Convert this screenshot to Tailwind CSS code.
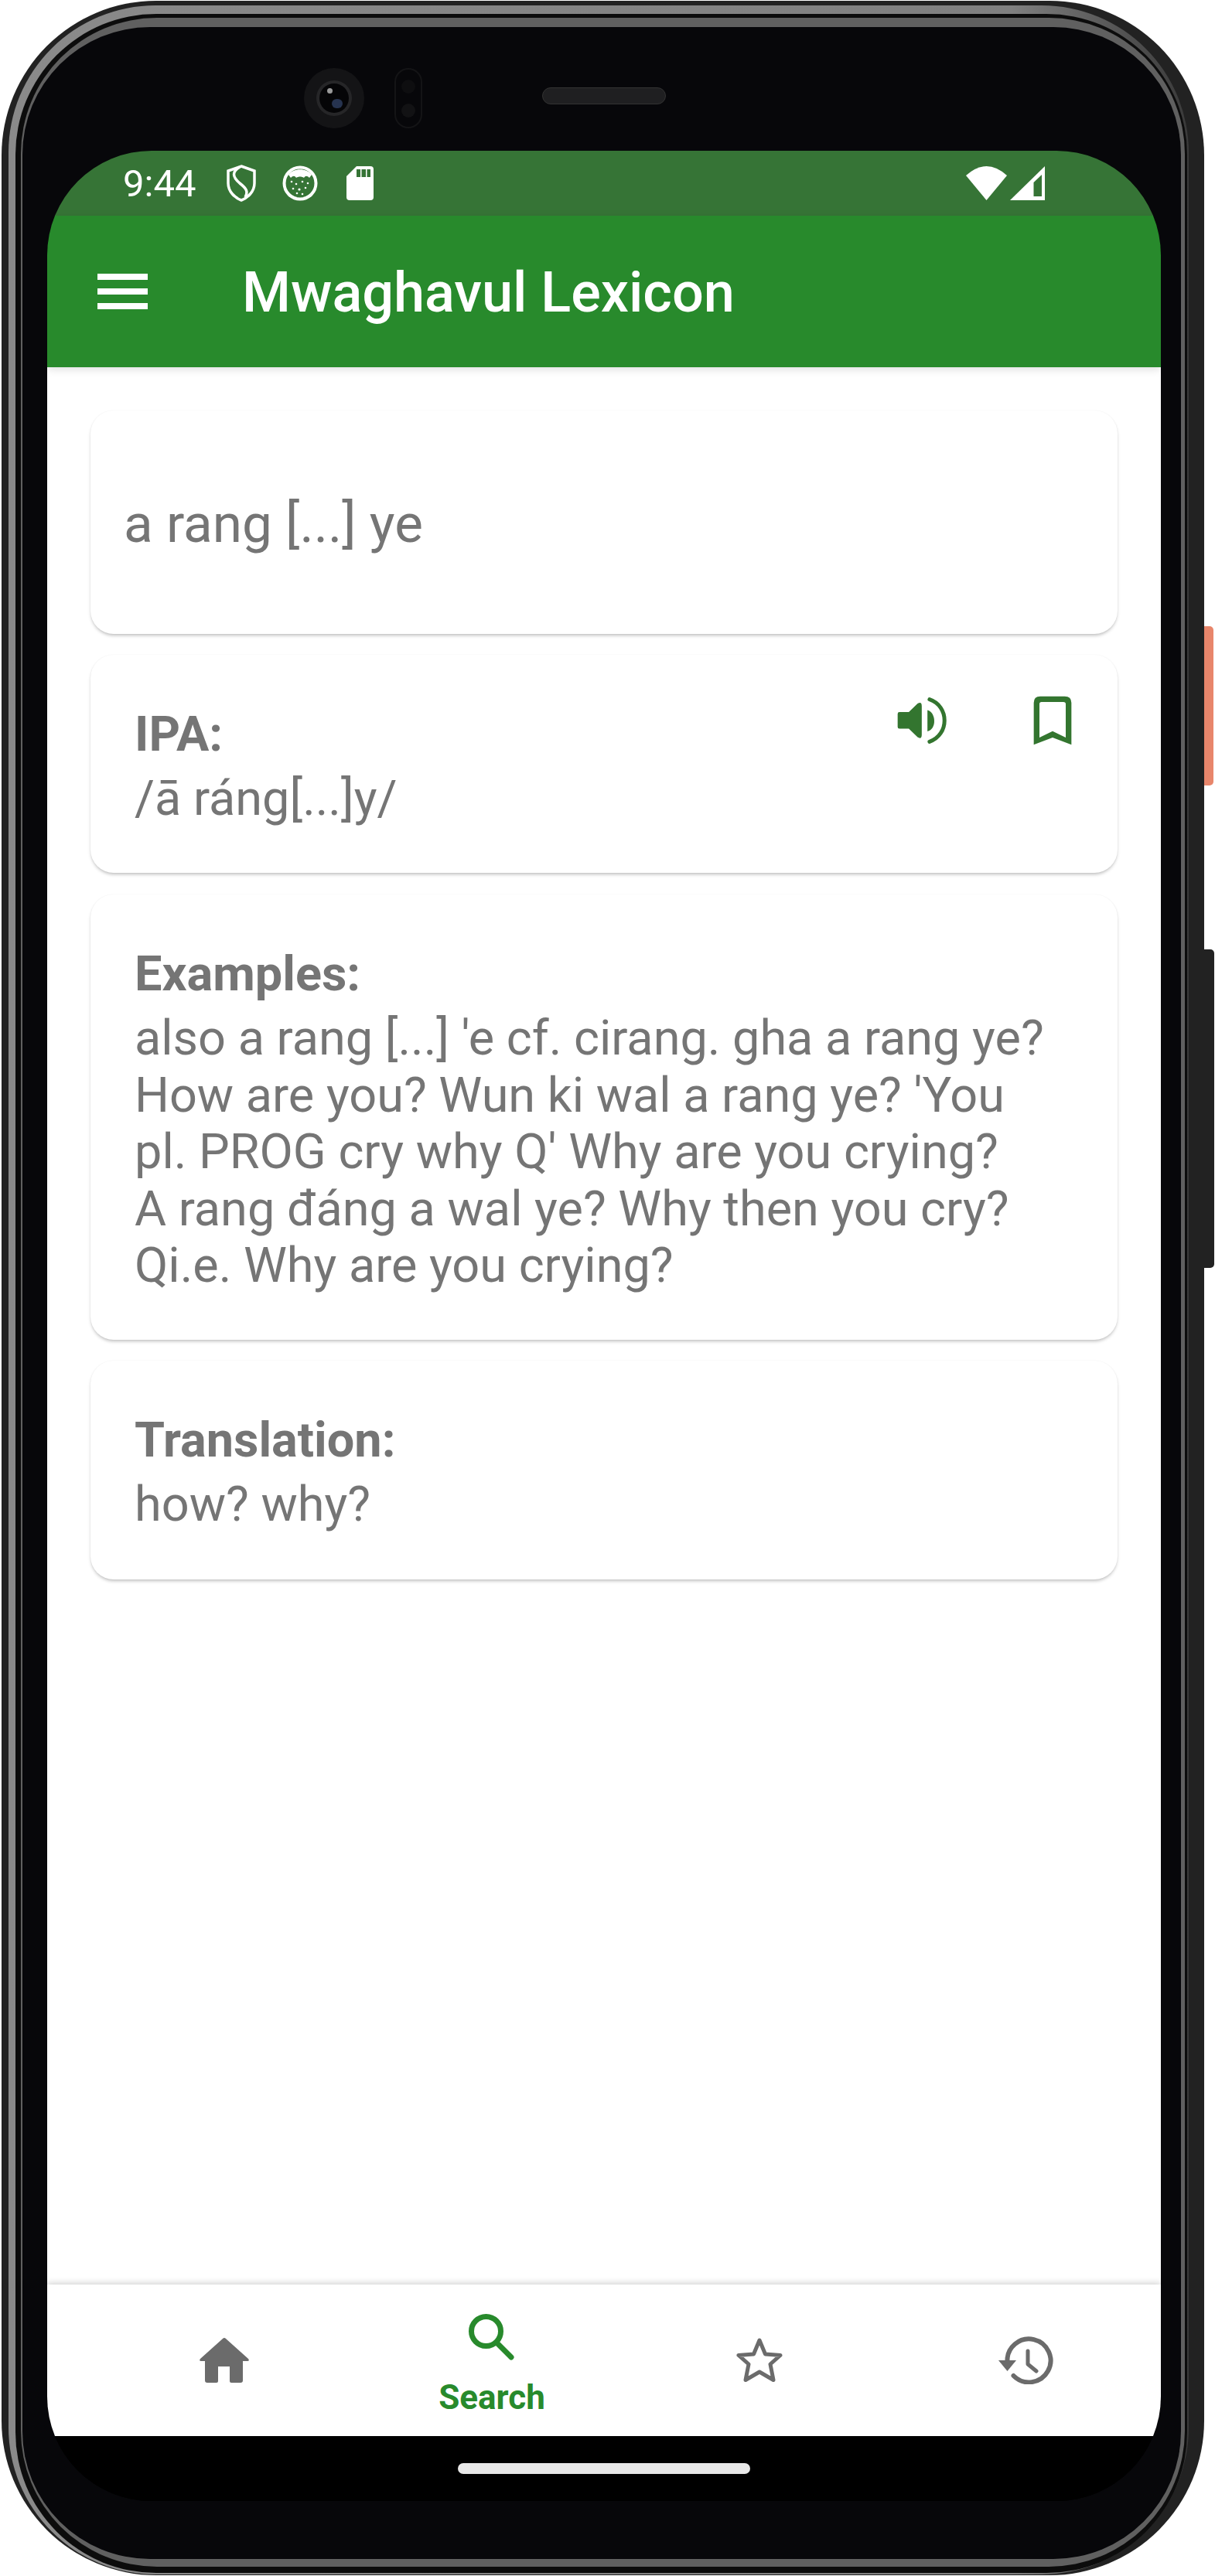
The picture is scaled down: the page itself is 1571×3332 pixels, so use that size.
<!DOCTYPE html>
<html lang="en">
<head>
  <meta charset="UTF-8" />
  <title>Mwaghavul Lexicon</title>
  <script src="https://cdn.jsdelivr.net/npm/@tailwindcss/browser@4"></script>
</head>
<body class="bg-white font-[Roboto,sans-serif]">
  <div class="relative w-[1571px] h-[3332px] pl-[2px] pt-[1px] overflow-hidden">

    <!-- Side buttons -->
    <div class="absolute left-[1556px] top-[810px] w-[13px] h-[206px] rounded-r-[5px] bg-[#e8866b]"></div>
    <div class="absolute left-[1556px] top-[1228px] w-[14px] h-[412px] rounded-r-[5px] bg-[#222222]"></div>

    <!-- Phone frame rings -->
    <div class="relative w-[1555px] h-[3330px] rounded-[200px] bg-[#222222] pl-[9px] pr-[20px] pt-[6px] pb-[1px]">
      <div class="h-full rounded-[190px] bg-linear-to-r from-[#8a8a8a] via-[#808080] via-85% to-[#3a3a3a] pl-[9px] pr-[2px] pt-[11px] pb-[2px]">
        <div class="h-full rounded-[182px] bg-[#0c0c0c] pl-[7px] pr-[3px] pt-[5px] pb-[8px]">
          <div class="h-full rounded-[176px] bg-[#606060] pl-[2px] pr-[5px] pt-[12px] pb-[10px]">
            <div class="relative h-full rounded-[165px] bg-[#07070a] pl-[32px] pr-[26px] pt-[160px]">

              <!-- Camera and earpiece -->
              <div class="absolute left-[364px] top-[53px] w-[78px] h-[78px] rounded-full bg-[#141416] flex items-center justify-center">
                <div class="relative w-[46px] h-[46px] rounded-full bg-[#262628] flex items-center justify-center">
                  <div class="w-[38px] h-[38px] rounded-full bg-[#050507]"></div>
                  <div class="absolute left-[14px] top-[10px] w-[7px] h-[7px] rounded-full bg-[#9a9a9a]"></div>
                  <div class="absolute left-[20px] top-[24px] w-[14px] h-[12px] rounded-full bg-[#26334f]"></div>
                </div>
              </div>
              <div class="absolute left-[481px] top-[53px] w-[36px] h-[78px] rounded-full border-2 border-[#141416] flex flex-col items-center justify-around py-[6px]">
                <div class="w-[18px] h-[18px] rounded-full bg-[#0e0e10]"></div>
                <div class="w-[18px] h-[18px] rounded-full bg-[#121214]"></div>
              </div>
              <div class="absolute left-[672px] top-[78px] w-[160px] h-[22px] rounded-full border border-[#333333] bg-[#1f1f21]"></div>

              <!-- Screen -->
              <div class="flex flex-col w-[1440px] h-[3040px] rounded-[135px] overflow-hidden bg-black">

                <!-- Status bar -->
                <div class="flex items-center h-[84px] shrink-0 bg-[#367436] pl-[98px] pr-[150px] text-white">
                  <span class="text-[49px] leading-none">9:44</span>
                  <svg class="ml-[39px]" width="40" height="48" viewBox="0 0 40 48" fill="none" stroke="white" stroke-width="3.5">
                    <path d="M20 2 L37 8 V24 C37 35 28 43 20 46 C12 43 3 35 3 24 V8 Z" />
                    <path d="M18 3 C8 9 8 15 18 24 C27 31 29 35 25 42" />
                  </svg>
                  <svg class="ml-[33px]" width="46" height="46" viewBox="0 0 46 46" fill="white">
                    <circle cx="23" cy="23" r="20.5" fill="none" stroke="white" stroke-width="4" />
                    <path d="M8 12 C14 3 32 3 38 12 L35 16 C32 13 30 13 28 16 C25 14 21 14 18 16 C16 13 14 13 11 16 Z" />
                    <circle cx="12" cy="21" r="1.3" /><circle cx="18" cy="24" r="1.3" /><circle cx="26" cy="21" r="1.3" />
                    <circle cx="33" cy="23" r="1.3" /><circle cx="14" cy="30" r="1.3" /><circle cx="22" cy="31" r="1.6" />
                    <circle cx="30" cy="29" r="1.3" /><circle cx="19" cy="36" r="1.3" /><circle cx="26" cy="37" r="1.3" />
                  </svg>
                  <svg class="ml-[37px]" width="35" height="44" viewBox="0 0 35 44">
                    <path fill="white" d="M13 0 H31 a4 4 0 0 1 4 4 V40 a4 4 0 0 1 -4 4 H4 a4 4 0 0 1 -4 -4 V13 Z" />
                    <path fill="#367436" d="M13 4 H18 V14 H13 Z M19.5 4 H25 V14 H19.5 Z M26.5 4 H31 V14 H26.5 Z" />
                  </svg>
                  <svg class="ml-auto" width="53" height="44" viewBox="0 0 53 44">
                    <path fill="white" d="M0 12 Q26.5 -12 53 12 L26.5 44 Z" />
                  </svg>
                  <svg class="ml-[4px]" width="45" height="44" viewBox="0 0 45 44">
                    <path fill="white" d="M0 44 L45 0 V44 Z" />
                    <path fill="#367436" d="M30.5 21 L41 11 V39 H30.5 Z" />
                  </svg>
                </div>

                <!-- App bar -->
                <div class="relative z-10 flex items-center h-[196px] shrink-0 bg-[#288a2c] pl-[65px] text-white shadow-[0_3px_10px_rgba(0,0,0,0.12)]">
                  <div class="flex flex-col gap-[11px] w-[65px]">
                    <div class="h-[8px] bg-white"></div>
                    <div class="h-[8px] bg-white"></div>
                    <div class="h-[8px] bg-white"></div>
                  </div>
                  <h1 class="ml-[122px] pt-[4px] text-[72px] font-medium leading-none">Mwaghavul Lexicon</h1>
                </div>

                <!-- Content -->
                <main class="flex-1 bg-white px-[56px] pt-[56px] text-[#757575] text-[63px] leading-[73.5px]">
                  <div class="flex items-center h-[289px] rounded-[30px] bg-white pl-[43px] pt-[5px] text-[69.3px] leading-none shadow-[0_3px_4px_-1px_rgba(0,0,0,0.25),0_0_2px_rgba(0,0,0,0.06)]">
                    a rang [...] ye
                  </div>

                  <div class="flex items-start justify-between h-[282px] mt-[27px] rounded-[30px] bg-white pl-[57px] pr-[59px] pt-[57px] shadow-[0_3px_4px_-1px_rgba(0,0,0,0.25),0_0_2px_rgba(0,0,0,0.06)]">
                    <div>
                      <h2 class="font-bold leading-[92px]">IPA:</h2>
                      <p>/ā ráng[...]y/</p>
                    </div>
                    <div class="flex items-start gap-[110px] -mt-[4px]">
                      <svg width="67" height="62" viewBox="30 30 200 185">
                        <path fill="#33752f" d="M35 100 Q35 93 42 93 H78 L112 60 Q128 50 128 70 V180 Q128 200 112 190 L78 157 H42 Q35 157 35 150 Z" />
                        <path fill="#33752f" d="M150 85 C185 95 185 160 150 167 Z" />
                        <path fill="none" stroke="#33752f" stroke-width="15" stroke-linecap="round" d="M158 44 C235 70 235 180 158 207" />
                      </svg>
                      <svg width="50" height="64" viewBox="558 28 150 192">
                        <path fill="#33752f" fill-rule="evenodd" d="M560 218 V55 Q560 30 585 30 H680 Q706 30 706 55 V218 L633 190 Z M582 190 L633 165 L684 190 V60 Q684 52 675 52 H590 Q582 52 582 60 Z" />
                      </svg>
                    </div>
                  </div>

                  <div class="h-[576px] mt-[28px] rounded-[30px] bg-white pl-[57px] pt-[57px] shadow-[0_3px_4px_-1px_rgba(0,0,0,0.25),0_0_2px_rgba(0,0,0,0.06)]">
                    <h2 class="font-bold leading-[92px]">Examples:</h2>
                    <p>also a rang [...] 'e cf. cirang. gha a rang ye?<br />How are you? Wun ki wal a rang ye? 'You<br />pl. PROG cry why Q' Why are you crying?<br />A rang đáng a wal ye? Why then you cry?<br />Qi.e. Why are you crying?</p>
                  </div>

                  <div class="h-[283px] mt-[27px] rounded-[30px] bg-white pl-[57px] pt-[57px] shadow-[0_3px_4px_-1px_rgba(0,0,0,0.25),0_0_2px_rgba(0,0,0,0.06)]">
                    <h2 class="font-bold leading-[92px]">Translation:</h2>
                    <p>how? why?</p>
                  </div>
                </main>

                <!-- Bottom navigation -->
                <nav class="relative grid grid-cols-4 h-[196px] shrink-0 bg-white pl-[56px] shadow-[0_-2px_8px_rgba(0,0,0,0.18)]">
                  <div class="flex items-center justify-center">
                    <svg width="64" height="58" viewBox="0 0 64 58">
                      <path fill="#6b6b6b" d="M30 1 Q32 -1 34 1 L63 27 Q65 30 62 30 H56 V55 Q56 58 53 58 H41 Q39 58 39 56 V37 H24 V56 Q24 58 22 58 H10 Q7 58 7 55 V30 H2 Q-1 30 1 27 Z" />
                    </svg>
                  </div>
                  <div class="flex flex-col items-center pt-[38px] text-[#288a2c]">
                    <svg width="60" height="60" viewBox="0 0 60 60" fill="none" stroke="#288a2c" stroke-width="7" stroke-linecap="round">
                      <circle cx="22.5" cy="22.5" r="19" />
                      <path d="M38 39 L55 56" />
                    </svg>
                    <span class="mt-[26px] text-[44px] font-bold leading-[44px]">Search</span>
                  </div>
                  <div class="flex items-center justify-center">
                    <svg width="60" height="58" viewBox="0 0 60 58" fill="none" stroke="#6b6b6b" stroke-width="5" stroke-linejoin="round">
                      <polygon points="30,3 37.5,21 57,22.5 44,34 48,54.5 30,44 12,54.5 16,34 3,22.5 22.5,21" />
                    </svg>
                  </div>
                  <div class="flex items-center justify-center pr-[3px]">
                    <svg width="71" height="62" viewBox="0 0 71 62" fill="none" stroke="#6b6b6b" stroke-width="6" stroke-linecap="round" stroke-linejoin="round">
                      <path d="M11.5 33 A28 28 0 1 1 19.5 51" />
                      <polygon points="0,31 23,31 11.5,45" fill="#6b6b6b" stroke="none" />
                      <path d="M38 19 V36 L49 45" stroke-width="5" />
                    </svg>
                  </div>
                </nav>

                <!-- Gesture bar -->
                <div class="flex justify-center h-[84px] shrink-0 bg-black pt-[35px]">
                  <div class="w-[378px] h-[14px] rounded-full bg-[#e8e8e8]"></div>
                </div>
              </div>
            </div>
          </div>
        </div>
      </div>
    </div>
  </div>
</body>
</html>
